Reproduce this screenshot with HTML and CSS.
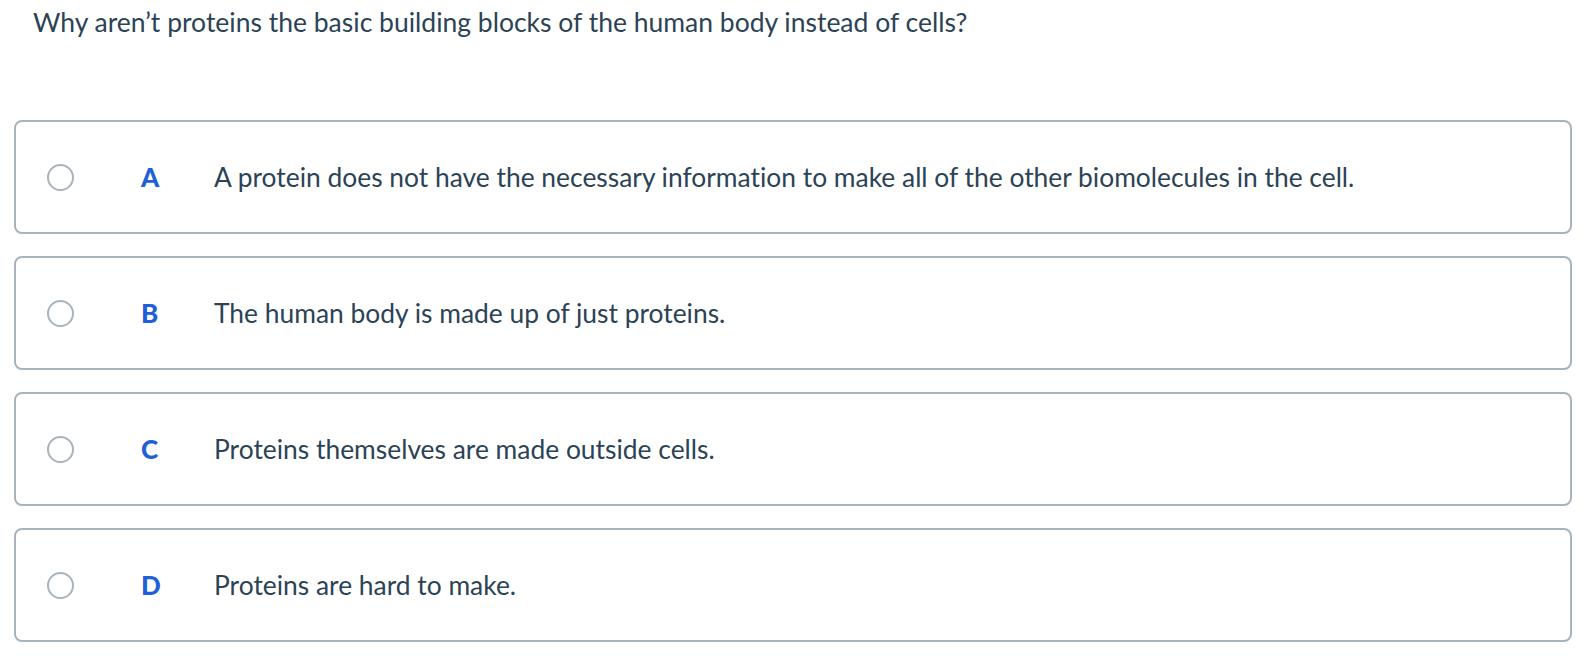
FILE: index.html
```html
<!DOCTYPE html>
<html lang="en">
<head>
<meta charset="utf-8">
<title>Question</title>
<link rel="stylesheet" href="styles.css">
</head>
<body>
<main class="quiz">
  <h1 class="question">Why aren’t proteins the basic building blocks of the human body instead of cells?</h1>
  <div class="options">
    <label class="option">
      <span class="radio"></span>
      <span class="letter">A</span>
      <span class="answer">A protein does not have the necessary information to make all of the other biomolecules in the cell.</span>
    </label>
    <label class="option">
      <span class="radio"></span>
      <span class="letter">B</span>
      <span class="answer">The human body is made up of just proteins.</span>
    </label>
    <label class="option">
      <span class="radio"></span>
      <span class="letter">C</span>
      <span class="answer">Proteins themselves are made outside cells.</span>
    </label>
    <label class="option">
      <span class="radio"></span>
      <span class="letter">D</span>
      <span class="answer">Proteins are hard to make.</span>
    </label>
  </div>
</main>
</body>
</html>
```

FILE: styles.css
```css
html, body {
  margin: 0;
  padding: 0;
  background: #ffffff;
}

body {
  font-family: "Lato", "Noto Sans", sans-serif;
  font-variant-ligatures: none;
  color: #2c4356;
}

.quiz {
  padding: 0 18px 0 14px;
}

.question {
  margin: 0;
  padding: 6px 0 0 19px;
  font-size: 26.5px;
  font-weight: 400;
  line-height: 32px;
  color: #2c4356;
}

.options {
  display: flex;
  flex-direction: column;
  gap: 22px;
  margin-top: 82px;
}

.option {
  box-sizing: border-box;
  height: 114px;
  border: 2px solid #a8b3bd;
  border-radius: 8px;
  display: flex;
  align-items: center;
  padding-left: 31px;
}

.radio {
  box-sizing: border-box;
  width: 27px;
  height: 27px;
  border: 2px solid #a8b3bd;
  border-radius: 50%;
  flex: none;
}

.letter {
  width: 73px;
  margin-left: 67px;
  flex: none;
  font-weight: 900;
  font-size: 26px;
  line-height: 32px;
  color: #1f5fd7;
}

.answer {
  font-size: 26.4px;
  line-height: 32px;
  color: #2c4356;
}
```
